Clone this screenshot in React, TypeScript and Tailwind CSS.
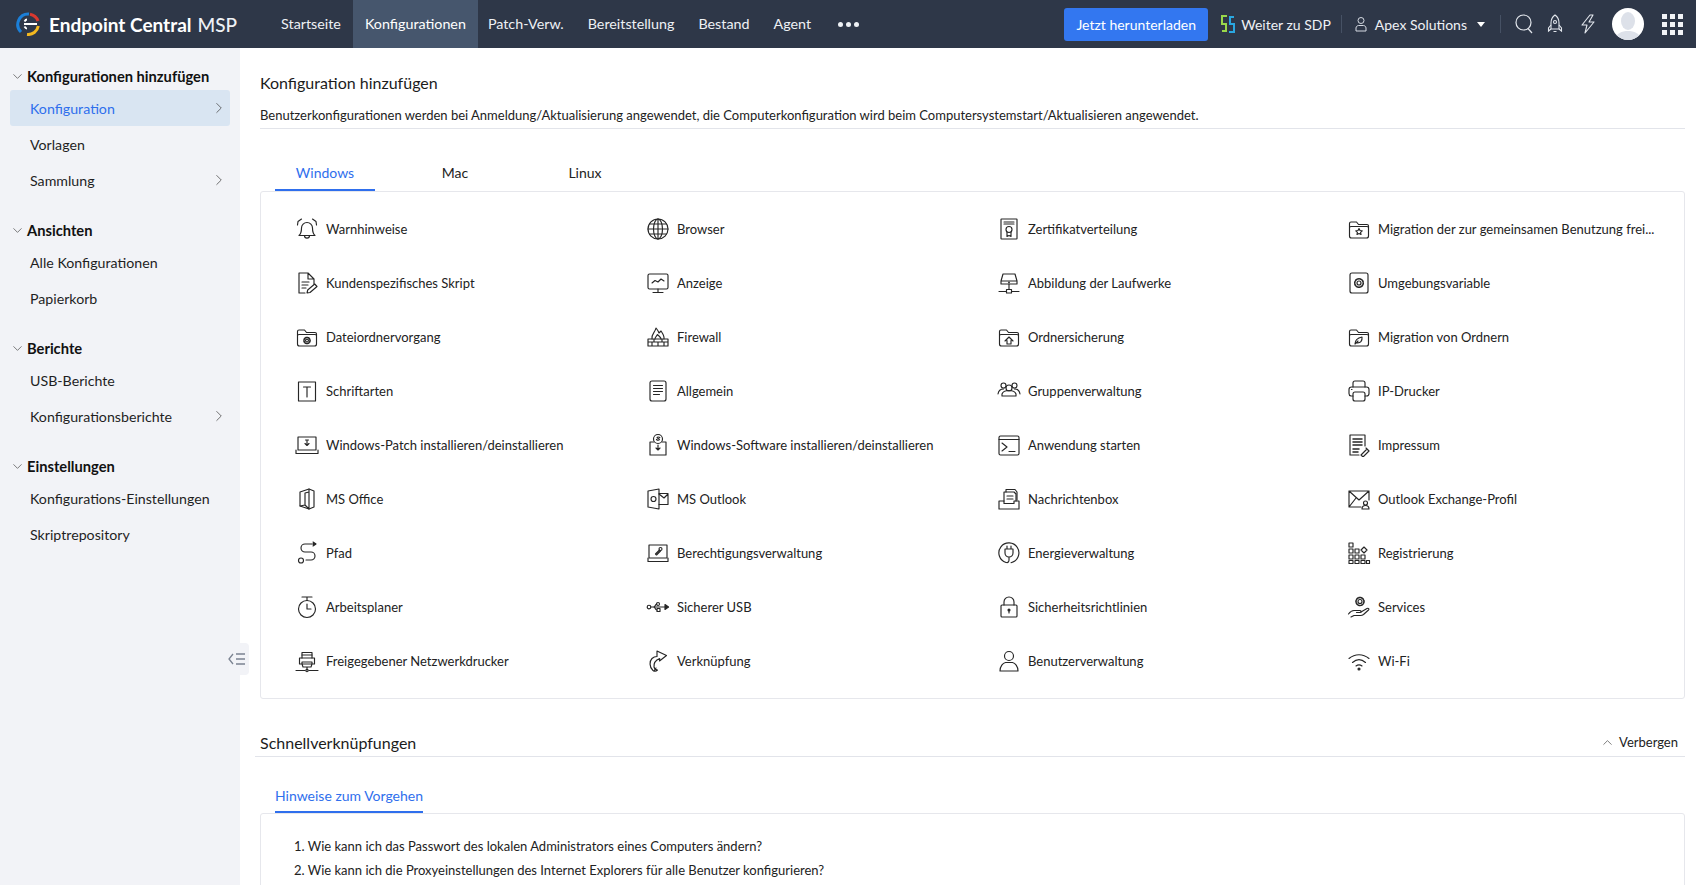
import React from 'react'
import { ChevronDown, ChevronRight, ChevronUp } from 'lucide-react'

const Ico = ({ children }: { children: React.ReactNode }) => (
  <svg viewBox="0 0 24 24" width="24" height="24" fill="none" stroke="#262626" strokeWidth="1.15" strokeLinecap="round" strokeLinejoin="round" className="shrink-0 -ml-[2px]">
    {children}
  </svg>
)

const folder = "M2.5 19V6.5A1.5 1.5 0 0 1 4 5h5.5l2 2.5H20A1.5 1.5 0 0 1 21.500 9v10A2 2 0 0 1 19.500 21h-15A2 2 0 0 1 2.500 19z M2.500 11c0-1 .8-1.500 1.500-1.500h16c.8 0 1.500.5 1.500 1.500"

const gear = (cx: number, cy: number, r: number) => (
  <>
    <circle cx={cx} cy={cy} r={r * 0.4} />
    <circle cx={cx} cy={cy} r={r * 0.85} strokeDasharray="1.6 1" strokeWidth="1.6" />
  </>
)

const items: [string, React.ReactNode][] = [
  ['Warnhinweise', <><path d="M4 18.500c1.800-1.500 2.500-3.500 2.500-7.500a5.500 5.500 0 0 1 11 0c0 4 .7 6 2.500 7.500z" /><path d="M9.500 18.500c0 3.500 5 3.500 5 0" /><path d="M6.500 2 3 4.500 2.500 8M17.500 2 21 4.500l.5 3.500" /></>],
  ['Browser', <><circle cx="12" cy="12" r="10" /><ellipse cx="12" cy="12" rx="4.500" ry="10" /><path d="M2 12h20M12 2v20M3.500 7h17M3.500 17h17" /></>],
  ['Zertifikatverteilung', <><rect x="4" y="2" width="16" height="20" rx=".5" /><path d="M7 5h10M7 7h10" /><circle cx="12" cy="12.500" r="3" /><path d="M10 15v4.500l2-1 2 1V15" /></>],
  ['Migration der zur gemeinsamen Benutzung frei...', <><path d={folder} /><path d="m12 11.500 1 2 2.200.3-1.600 1.500.4 2.200-2-1-2 1 .4-2.200-1.600-1.500 2.200-.3z" /></>],
  ['Kundenspezifisches Skript', <><path d="M4 2h9l6 6v5M13 2v6h6M4 2v20h6" /><path d="M7 11h7M7 14h6M7 17h4" /><path d="m12 22 .7-3 7-6 2.300 2.500-7 6z" /></>],
  ['Anzeige', <><rect x="2" y="3" width="20" height="15" rx="1.500" /><path d="m6 12 3-2.500 3 1.500 3-3 3 2" /><path d="M12 18v3M7 21.500h10" /></>],
  ['Abbildung der Laufwerke', <><path d="M6 3h12l2 7v3H4v-3zM4 10h16M12 13v5M2 20.500h7M15 20.500h7" /><rect x="9.500" y="18.500" width="5" height="3.500" /><circle cx="12" cy="11.500" r=".4" /></>],
  ['Umgebungsvariable', <><rect x="3" y="2" width="18" height="20" rx="2" />{gear(12, 12, 5)}</>],
  ['Dateiordnervorgang', <><path d={folder} />{gear(12, 15.500, 3.600)}</>],
  ['Firewall', <><path d="M6 14c-1-5 3-6 4-11 1.500 2 2.500 3 3 5l2-2c2 3 3.500 5 3 8" /><path d="M9 14c0-2 2-3 2.500-4.500 1 1.500 3.500 2.500 3.500 4.500" /><path d="M2 14h20v3H2zM2 17h20v4H2zM8 14v3M16 14v3M12 17v4M6 17v4M18 17v4" /></>],
  ['Ordnersicherung', <><path d={folder} /><path d="m8 16 4-4 4 4M10 15.500V19h4v-3.500" /></>],
  ['Migration von Ordnern', <><path d={folder} /><path d="M8 19c0-4 2-6 7-7 .5 4-1.500 6.500-5.500 5.800M8 19l3-3" /></>],
  ['Schriftarten', <><rect x="3.500" y="3" width="17" height="19" /><path d="M8.500 8h7M12 8v10" /></>],
  ['Allgemein', <><rect x="4" y="2" width="16" height="20" rx="2" /><path d="M7.500 6.500h9M7.500 9.500h9M7.500 12.500h9M7.500 15.500h6" /></>],
  ['Gruppenverwaltung', <><circle cx="6.500" cy="6.500" r="2.500" /><circle cx="17.500" cy="6.500" r="2.500" /><circle cx="12" cy="9" r="3" /><path d="M1 15c.5-3 2.500-5 5.500-5M23 15c-.5-3-2.500-5-5.500-5M5 15c1-3 3-3.500 7-3.500s6 .5 7 3.500v2H5z" /></>],
  ['IP-Drucker', <><path d="M6 8V4a2 2 0 0 1 2-2h8a2 2 0 0 1 2 2v4" /><path d="M6 17H4a2.500 2.500 0 0 1-2-2.500V10.500A2.500 2.500 0 0 1 4.500 8h15a2.500 2.500 0 0 1 2.500 2.500v4a2.500 2.500 0 0 1-2.500 2.500H18" /><rect x="6" y="13" width="12" height="9" rx="2" /><path d="M4.500 10.500h.5" /></>],
  ['Windows-Patch installieren/deinstallieren', <><rect x="3" y="4" width="18" height="13" /><path d="M1 20.500h22M1 17v3.500M23 17v3.500M12 7v5M10 10.500l2 2 2-2M10.500 7h3" /></>],
  ['Windows-Software installieren/deinstallieren', <><circle cx="12" cy="6" r="4.500" /><path d="M7.500 9H4v13h16V9h-3.500M12 12v5M10 15l2 2 2-2" /><path d="M10.500 6.500c1 1 2.500 1 3 0 .3-1-2.800-1-2.500-2 .4-.8 2-.6 2.800 0" /></>],
  ['Anwendung starten', <><rect x="2" y="3" width="20" height="19" rx="1.500" /><path d="M2 6.500h20M5 10l5 4-5 4M12 18.500h6" /></>],
  ['Impressum', <><path d="M3 2h15v11M3 2v20h9" /><path d="M6 6h9M6 9h9M6 12h9M6 16h6M6 19h5" strokeWidth="1.500" /><path d="m14 22 6-6 2 2-6 6zM19 15l3 3" /></>],
  ['MS Office', <><path d="M14 2 5 5v14l9 3 5-2V4z" /><path d="M14 2v20M5 19l5-1V6l4-1M10 18l4 4" /></>],
  ['MS Outlook', <><path d="M13 2 2 4v16l11 2z" /><circle cx="7.500" cy="12" r="2.500" /><path d="M13 6.500h9v11h-9M13 7l5 4 4-4" /></>],
  ['Nachrichtenbox', <><path d="M7 14V5h10l2 2v7" /><path d="M9 5V2.500h9L20 5v8" /><path d="M10 9h6M10 12h6" /><path d="M2 14h5v2.500h10V14h5v8H2z" /></>],
  ['Outlook Exchange-Profil', <><path d="M2 4h20v9M2 4v16h12M2 4l10 9 10-9M2 20l7-9" /><circle cx="18.500" cy="16" r="2" /><path d="M15 22c0-3 1.500-3.500 3.500-3.500S22 19 22 22z" /></>],
  ['Pfad', <><path d="M20 3H10a4 4 0 0 0 0 8h6a4 4 0 0 1 0 8h-5" /><path d="m18 1 3 2-3 2" fill="#262626" /><circle cx="6" cy="19.500" r="2.500" /></>],
  ['Berechtigungsverwaltung', <><rect x="3" y="4" width="18" height="13" /><path d="M2 20.500h20M2 17v3.500M22 17v3.500" /><circle cx="14.500" cy="8" r="1.500" /><path d="m13.500 9-4 4 1 1 4-4" /></>],
  ['Energieverwaltung', <><path d="M14 21.700A10 10 0 1 0 9 21.500" /><path d="M8 8v4a4 4 0 0 0 8 0V8zM10 8V5M14 8V5M12 16v3c0 1.500-1 3-2.500 2.500" /></>],
  ['Registrierung', <><rect x="2" y="2" width="4" height="4" /><rect x="2" y="8" width="4" height="4" /><rect x="8" y="8" width="4" height="4" /><rect x="2" y="14" width="4" height="4" /><rect x="8" y="14" width="4" height="4" /><rect x="14" y="14" width="4" height="4" /><rect x="2" y="19.500" width="4" height="3" /><rect x="8" y="19.500" width="4" height="3" /><rect x="14" y="19.500" width="4" height="3" /><rect x="19.500" y="19.500" width="3" height="3" /><path d="m17 6 3 3-3 3-3-3z" /></>],
  ['Arbeitsplaner', <><circle cx="12" cy="14" r="8.500" /><path d="M7 2h10M12 2v3.500M12 9v5h4" /></>],
  ['Sicherer USB', <><circle cx="3" cy="12" r="1.800" /><path d="M5 12h17" /><path d="M19 9.500v5l3.500-2.500z" fill="#262626" /><path d="M8 12c1 0 1-3 3-3M8 12c1 0 1 3 3 3" /><circle cx="12" cy="9" r="1.500" /><rect x="11" y="13.500" width="3" height="3" /></>],
  ['Sicherheitsrichtlinien', <><rect x="4" y="10" width="16" height="12" rx="1" /><path d="M7 10V7a5 5 0 0 1 10 0v3" /><circle cx="12" cy="15" r="1" fill="#262626" /><path d="M12 15v3" /></>],
  ['Services', <><circle cx="13" cy="6.500" r="2" /><circle cx="13" cy="6.500" r="4" strokeDasharray="1.800 1.100" strokeWidth="1.600" /><path d="M1.500 19c1.500-2 3-3.500 5.500-3.500h6c1.500 0 1.500 2 0 2H9.500" /><path d="m14 17 6-3.500c1.500-.8 2.500.5 1.500 1.500l-5 4.500c-1 .8-2 1-3 1H7l-3 1.500" /></>],
  ['Freigegebener Netzwerkdrucker', <><path d="M7 9V3.500h10V9" /><path d="M7 6h10M4.500 9h15v6h-15zM7 15v-2h10v2M7 15l1 3h8l1-3M12 18v3M1 21.500h9M14 21.500h9" /><circle cx="12" cy="21.500" r="1.200" /></>],
  ['Verknüpfung', <><path d="M11 2l9.500 4.500-7 5.500.2-2.500C10 11 7.500 13.500 8 18c.5 1.500 2 3 3.500 3-1.500 1.500-3 1.500-4.500 .5C3 18 3.500 12 6 9.500c1.500-1.500 3.500-2 5-2z" /><path d="m8 22 2-3" /></>],
  ['Benutzerverwaltung', <><circle cx="12" cy="7" r="4.500" /><path d="M3 22c0-5 3-8 5.500-8.500h7C18 14 21 17 21 22z" /></>],
  ['Wi-Fi', <><path d="M2 9.500c6-5 14-5 20 0M5.500 13.500c4-3.500 9-3.500 13 0M9 17c2-1.500 4-1.500 6 0" /><circle cx="12" cy="20" r="1" fill="#262626" /></>],
]

const Head = ({ label }: { label: string }) => (
  <div className="flex items-center h-7 pl-[10px]">
    <ChevronDown size={15} strokeWidth={1.1} className="text-[#444] mr-[2px]" />
    <span className="font-bold text-[14.7px] text-[#111]">{label}</span>
  </div>
)

const Item = ({ label, arrow, active }: { label: string; arrow?: boolean; active?: boolean }) => (
  <div className={`flex items-center justify-between h-9 mx-[10px] pl-5 pr-[2px] text-[14.2px] rounded-[3px] ${active ? 'bg-[#d9e5f2] text-[#2f6fed]' : 'text-[#1f1f1f]'}`}>
    <span className="pt-[2px]">{label}</span>
    {arrow && <ChevronRight size={18} strokeWidth={1} className="text-[#444]" />}
  </div>
)

const Sep = ({ cls }: { cls: string }) => <div className={`w-px h-[18px] bg-[#465164] ${cls}`} />

export default function App() {
  return (
    <div className="relative flex flex-col h-screen overflow-hidden bg-white text-[14px] font-['Lato','Open_Sans',sans-serif] text-[#222]">
      <header className="flex items-center h-12 shrink-0 bg-[#2e3748] text-[#eef1f5]">
        <svg viewBox="0 0 24 24" width="24" height="24" fill="none" className="ml-4 shrink-0">
          <path d="M13 2A10.500 10.500 0 0 0 5 20" stroke="#1b7fd8" strokeWidth="3" />
          <path d="M14 2.300A10.500 10.500 0 0 1 22 9" stroke="#d8382f" strokeWidth="3" />
          <path d="M22.300 14A10.500 10.500 0 0 1 11 22.500" stroke="#f3b81f" strokeWidth="3" />
          <path d="M8 12h13M11 7.500c-1 0-2 1-2.500 2M11 16.500c-1 0-2-1-2.500-2" stroke="#fff" strokeWidth="1.800" />
        </svg>
        <div className="ml-[9px] text-[19px] leading-none whitespace-nowrap">
          <span className="font-bold text-white">Endpoint Central</span>
          <span className="ml-[6px] font-medium">MSP</span>
        </div>
        <nav className="flex items-center h-full ml-[32px] text-[14.3px]">
          <a className="flex items-center h-full px-3">Startseite</a>
          <a className="flex items-center h-full px-3 -mr-[2px] bg-[#46566d] text-white">Konfigurationen</a>
          <a className="flex items-center h-full px-3">Patch-Verw.</a>
          <a className="flex items-center h-full px-3">Bereitstellung</a>
          <a className="flex items-center h-full px-3">Bestand</a>
          <a className="flex items-center h-full px-3">Agent</a>
          <span className="flex gap-[3px] ml-[15px]">
            <i className="size-[5px] rounded-full bg-[#eef1f5]" />
            <i className="size-[5px] rounded-full bg-[#eef1f5]" />
            <i className="size-[5px] rounded-full bg-[#eef1f5]" />
          </span>
        </nav>
        <button className="ml-auto flex items-center justify-center w-36 h-[33px] rounded-[3px] bg-[#3377f0] text-white">Jetzt herunterladen</button>
        <svg viewBox="0 0 14 18" width="14" height="18" fill="none" strokeWidth="2" className="ml-[13px] shrink-0">
          <path d="M6 1H1v8h4v7H1" stroke="#9ad84a" />
          <path d="M8 17h5V9H9V2h4" stroke="#2aa7e0" />
        </svg>
        <span className="ml-[6px]">Weiter zu SDP</span>
        <Sep cls="ml-[10px]" />
        <svg viewBox="0 0 12 16" width="12" height="16" fill="none" stroke="#d5dae2" strokeWidth="1" className="ml-[13px] shrink-0">
          <circle cx="6" cy="4.500" r="3" />
          <path d="M1 15v-3c0-1.500 1.500-2.500 2.500-2.500h5c1 0 2.500 1 2.500 2.500v3z" />
        </svg>
        <span className="ml-[8px]">Apex Solutions</span>
        <svg viewBox="0 0 8 5" width="8" height="5" className="ml-[10px] shrink-0"><path d="M0 0h8L4 5z" fill="#fff" /></svg>
        <Sep cls="ml-[15px]" />
        <svg viewBox="0 0 18 20" width="18" height="20" fill="none" stroke="#e3e7ed" strokeWidth="1.200" className="ml-[14px] shrink-0">
          <circle cx="8.500" cy="8.500" r="7.500" />
          <path d="m13 14.500 4 4.500" />
        </svg>
        <svg viewBox="0 0 16 20" width="16" height="20" fill="none" stroke="#e3e7ed" strokeWidth="1.100" className="ml-[14px] shrink-0">
          <path d="M8 1c3 2 4 5 4 8v6H4V9c0-3 1-6 4-8z" />
          <circle cx="8" cy="8" r="1.500" />
          <path d="M4 11l-2.500 3v3l2.500-2M12 11l2.500 3v3L12 15M6.500 17.500h3" />
        </svg>
        <svg viewBox="0 0 16 20" width="16" height="20" fill="none" stroke="#e3e7ed" strokeWidth="1.100" strokeLinejoin="round" className="ml-[17px] shrink-0">
          <path d="M10 1 2 11h5l-2 8 9-11H9l4-7z" />
        </svg>
        <div className="relative ml-4 size-8 shrink-0 overflow-hidden rounded-full bg-white">
          <svg viewBox="0 0 32 32" width="32" height="32"><ellipse cx="16" cy="13" rx="7" ry="9" fill="#dde1e9" /><path d="M3 32c1-7 7-9 13-9s12 2 13 9z" fill="#dde1e9" /></svg>
        </div>
        <div className="ml-[18px] mr-[13px] grid grid-cols-3 gap-[3px] shrink-0">
          {Array.from({ length: 9 }).map((_, i) => <i key={i} className="size-[5px] bg-[#f2f4f7]" />)}
        </div>
      </header>

      <div className="flex flex-1 min-h-0">
        <aside className="flex flex-col gap-[18px] w-60 shrink-0 pt-[14px] bg-[#f2f3f7]">
          <div>
            <Head label="Konfigurationen hinzufügen" />
            <Item label="Konfiguration" arrow active />
            <Item label="Vorlagen" />
            <Item label="Sammlung" arrow />
          </div>
          <div>
            <Head label="Ansichten" />
            <Item label="Alle Konfigurationen" />
            <Item label="Papierkorb" />
          </div>
          <div>
            <Head label="Berichte" />
            <Item label="USB-Berichte" />
            <Item label="Konfigurationsberichte" arrow />
          </div>
          <div>
            <Head label="Einstellungen" />
            <Item label="Konfigurations-Einstellungen" />
            <Item label="Skriptrepository" />
          </div>
        </aside>

        <main className="flex-1 min-w-0 pl-5 pr-[11px] pt-6">
          <h1 className="text-[16px] leading-[22px] text-[#1c1c1c]">Konfiguration hinzufügen</h1>
          <p className="mt-[11px] pb-[3px] text-[13px] leading-5 border-b border-[#e2e4ea]">Benutzerkonfigurationen werden bei Anmeldung/Aktualisierung angewendet, die Computerkonfiguration wird beim Computersystemstart/Aktualisieren angewendet.</p>

          <div className="flex gap-[30px] ml-[15px] mt-[29px] h-[33px]">
            <div className="flex justify-center w-[100px] pt-[4px] border-b-2 border-[#2f6fed] text-[#2f6fed]">Windows</div>
            <div className="flex justify-center w-[100px] pt-[4px]">Mac</div>
            <div className="flex justify-center w-[100px] pt-[4px]">Linux</div>
          </div>

          <section className="grid grid-cols-[351px_351px_350px_1fr] content-start h-[508px] pt-[10px] pl-[36px] pr-[20px] text-[13px] border border-[#e6e7ec] rounded-[3px]">
            {items.map(([label, icon]) => (
              <div key={label} className="flex items-center h-[54px] min-w-0">
                <span className="flex w-[29px] shrink-0">
                  <Ico>{icon}</Ico>
                </span>
                <span className="pt-[2px] whitespace-nowrap">{label}</span>
              </div>
            ))}
          </section>

          <div className="flex items-center justify-between h-6 mt-[34px] -ml-[5px] pl-[5px] pr-[7px] pb-[4px] border-b border-[#e2e4ea]">
            <h2 className="text-[16px] text-[#1c1c1c]">Schnellverknüpfungen</h2>
            <span className="flex items-center gap-[4px] text-[13px]">
              <ChevronUp size={15} strokeWidth={1.1} className="text-[#444]" />
              Verbergen
            </span>
          </div>

          <div className="flex ml-[15px] mt-[23px] h-[33px]">
            <div className="w-[148px] pt-[5px] border-b-2 border-[#2f6fed] text-[#2f6fed]">Hinweise zum Vorgehen</div>
          </div>
          <div className="h-[200px] pt-5 pl-[33px] text-[13px] border border-[#e6e7ec] rounded-[3px]">
            <p className="leading-6">1. Wie kann ich das Passwort des lokalen Administrators eines Computers ändern?</p>
            <p className="leading-6">2. Wie kann ich die Proxyeinstellungen des Internet Explorers für alle Benutzer konfigurieren?</p>
          </div>
        </main>
      </div>

      <div className="absolute left-[224px] top-[643px] flex items-center justify-center w-[25px] h-8 rounded-r-[4px] bg-[#f2f3f7]">
        <svg viewBox="0 0 18 14" width="18" height="14" fill="none" stroke="#7b8391" strokeWidth="1.300">
          <path d="M5 2 1 7l4 5M8 2h9M8 7h9M8 12h9" />
        </svg>
      </div>
    </div>
  )
}
